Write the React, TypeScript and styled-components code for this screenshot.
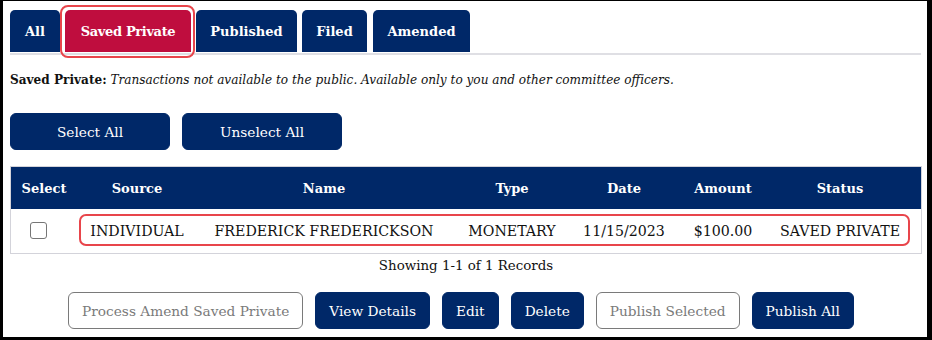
import React from "react";
import styled, { createGlobalStyle } from "styled-components";

const GlobalStyle = createGlobalStyle`
  html, body { margin: 0; padding: 0; background: #000; }
  body { font-family: "DejaVu Serif", Georgia, serif; color: #111; }
  * { box-sizing: border-box; }
`;

const NAVY = "#002868";
const RED = "#bf0d3e";
const HIGHLIGHT = "#e8454b";

const Frame = styled.div`
  width: 932px;
  height: 340px;
  border-style: solid;
  border-color: #000;
  border-width: 1px 5px 3px 3px;
  background: #fff;
  padding: 9px 6px 0 7px;
  display: flex;
  flex-direction: column;
`;

const TabBar = styled.div`
  display: flex;
  border-bottom: 2px solid #dfdfe4;
  padding-bottom: 1px;
`;

const Tab = styled.div<{ $active?: boolean; $marked?: boolean; $w: number; $gap: number }>`
  position: relative;
  width: ${(p) => p.$w}px;
  margin-left: ${(p) => p.$gap}px;
  height: 42px;
  display: flex;
  align-items: center;
  justify-content: center;
  white-space: nowrap;
  background: ${(p) => (p.$active ? RED : NAVY)};
  color: #fff;
  font-weight: bold;
  font-size: 13px;
  border-radius: 5px 5px 0 0;
  ${(p) =>
    p.$marked &&
    `
    letter-spacing: -0.35px;
    &::after {
      content: "";
      position: absolute;
      inset: -5px -4px -6px -5px;
      border: 2px solid ${HIGHLIGHT};
      border-radius: 8px;
    }
  `}
`;

const Note = styled.p`
  margin: 17px 0 0;
  font-size: 12.1px;
  line-height: 16px;
  color: #111;
  b { font-weight: bold; }
  i { font-style: italic; }
`;

const ButtonRow = styled.div<{ $center?: boolean }>`
  display: flex;
  gap: 12px;
  justify-content: ${(p) => (p.$center ? "center" : "flex-start")};
`;

const TopButtons = styled(ButtonRow)`
  margin-top: 25px;
`;

const Button = styled.button<{ $outline?: boolean; $width?: number }>`
  height: 37px;
  ${(p) => (p.$width ? `width: ${p.$width}px;` : "padding: 0 13px;")}
  border-radius: 6px;
  font-family: "DejaVu Serif", Georgia, serif;
  font-size: 13.7px;
  border: 1px solid ${(p) => (p.$outline ? "#7a7a7a" : NAVY)};
  background: ${(p) => (p.$outline ? "#fff" : NAVY)};
  color: ${(p) => (p.$outline ? "#7a7a7a" : "#fff")};
  cursor: pointer;
`;

const Table = styled.div`
  margin-top: 16px;
  width: 912px;
  border: 1px solid #d3d3da;
`;

const cols = "66px 120px 254px 122px 102px 96px 1fr";

const HeadRow = styled.div`
  display: grid;
  grid-template-columns: ${cols};
  height: 42px;
  background: ${NAVY};
  color: #fff;
  font-weight: bold;
  font-size: 13px;
`;

const BodyRow = styled.div<{ $marked?: boolean }>`
  position: relative;
  display: grid;
  grid-template-columns: ${cols};
  height: 44px;
  font-size: 14.2px;
  color: #111;
  ${(p) =>
    p.$marked &&
    `
    &::after {
      content: "";
      position: absolute;
      left: 68px;
      right: 11px;
      top: 5px;
      bottom: 7px;
      border: 2px solid ${HIGHLIGHT};
      border-radius: 7px;
      pointer-events: none;
    }
  `}
`;

const Cell = styled.div<{ $start?: boolean; $padRight?: number }>`
  display: flex;
  align-items: center;
  justify-content: ${(p) => (p.$start ? "flex-start" : "center")};
  padding-left: ${(p) => (p.$start ? "19px" : "0")};
  padding-right: ${(p) => (p.$padRight ? `${p.$padRight}px` : "0")};
  white-space: nowrap;
`;

const Check = styled.input`
  appearance: none;
  width: 17px;
  height: 17px;
  margin: -2px 0 0 0;
  border: 1px solid #767676;
  border-radius: 3px;
  background: #fff;
`;

const Summary = styled.div`
  width: 912px;
  text-align: center;
  font-size: 13.4px;
  line-height: 16px;
  margin-top: 4px;
`;

const BottomButtons = styled(ButtonRow)`
  width: 912px;
  margin-top: 18px;
  padding-right: 10px;
`;

const tabs = [
  { label: "All", w: 50, gap: 0 },
  { label: "Saved Private", w: 126, gap: 5 },
  { label: "Published", w: 101, gap: 5 },
  { label: "Filed", w: 65, gap: 5 },
  { label: "Amended", w: 97, gap: 6 },
];
const headers = ["Select", "Source", "Name", "Type", "Date", "Amount", "Status"];
const row = ["INDIVIDUAL", "FREDERICK FREDERICKSON", "MONETARY", "11/15/2023", "$100.00", "SAVED PRIVATE"];

export default function App() {
  return (
    <>
      <GlobalStyle />
      <Frame>
        <TabBar>
          {tabs.map((t) => (
            <Tab
              key={t.label}
              $w={t.w}
              $gap={t.gap}
              $active={t.label === "Saved Private"}
              $marked={t.label === "Saved Private"}
            >
              {t.label}
            </Tab>
          ))}
        </TabBar>
        <Note>
          <b>Saved Private:</b> <i>Transactions not available to the public. Available only to you and other committee officers.</i>
        </Note>
        <TopButtons>
          <Button $width={160}>Select All</Button>
          <Button $width={160}>Unselect All</Button>
        </TopButtons>
        <Table>
          <HeadRow>
            {headers.map((h, i) => (
              <Cell key={h} $padRight={i === 6 ? 12 : 0}>{h}</Cell>
            ))}
          </HeadRow>
          <BodyRow $marked>
            <Cell $start>
              <Check type="checkbox" aria-label="Select row" />
            </Cell>
            {row.map((v, i) => (
              <Cell key={v} $padRight={i === 5 ? 12 : 0}>{v}</Cell>
            ))}
          </BodyRow>
        </Table>
        <Summary>Showing 1-1 of 1 Records</Summary>
        <BottomButtons $center>
          <Button $outline>Process Amend Saved Private</Button>
          <Button>View Details</Button>
          <Button>Edit</Button>
          <Button>Delete</Button>
          <Button $outline>Publish Selected</Button>
          <Button>Publish All</Button>
        </BottomButtons>
      </Frame>
    </>
  );
}
